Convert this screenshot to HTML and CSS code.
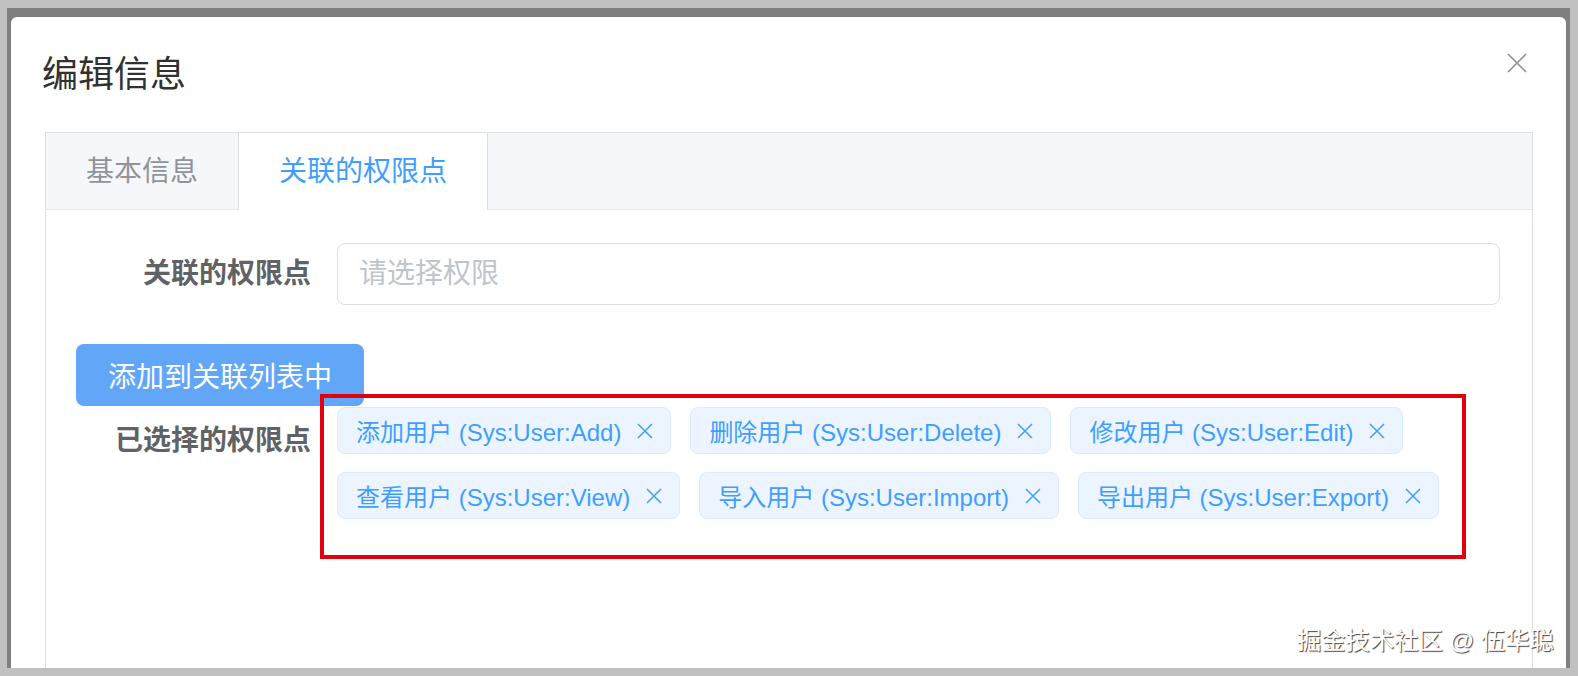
FILE: index.html
```html
<!DOCTYPE html>
<html lang="zh-CN">
<head>
<meta charset="utf-8">
<title>编辑信息</title>
<link rel="stylesheet" href="styles.css">
</head>
<body>
<div class="shot">
  <div class="screen">
    <div class="dialog">
      <div class="dialog-header">
        <span class="dialog-title">编辑信息</span>
        <button class="dialog-close" aria-label="关闭">
          <svg viewBox="0 0 20 20" width="20" height="20"><path d="M1 1 L19 19 M19 1 L1 19" stroke="#909399" stroke-width="1.6" fill="none"/></svg>
        </button>
      </div>
      <div class="dialog-body">
        <div class="tabs">
          <div class="tabs-nav">
            <div class="tab">基本信息</div>
            <div class="tab is-active">关联的权限点</div>
          </div>
          <div class="tabs-content">
            <div class="form-row">
              <label class="form-label">关联的权限点</label>
              <div class="form-control">
                <div class="select-input">请选择权限</div>
              </div>
            </div>
            <div class="btn-row">
              <button class="btn-primary">添加到关联列表中</button>
            </div>
            <div class="form-row selected-row">
              <label class="form-label">已选择的权限点</label>
              <div class="form-control tag-list">
                <span class="tag">添加用户 (Sys:User:Add)<i class="tag-close"><svg viewBox="0 0 20 20" width="20" height="20"><path d="M3 3 L17 17 M17 3 L3 17" stroke="#409eff" stroke-width="1.5" fill="none"/></svg></i></span>
                <span class="tag">删除用户 (Sys:User:Delete)<i class="tag-close"><svg viewBox="0 0 20 20" width="20" height="20"><path d="M3 3 L17 17 M17 3 L3 17" stroke="#409eff" stroke-width="1.5" fill="none"/></svg></i></span>
                <span class="tag">修改用户 (Sys:User:Edit)<i class="tag-close"><svg viewBox="0 0 20 20" width="20" height="20"><path d="M3 3 L17 17 M17 3 L3 17" stroke="#409eff" stroke-width="1.5" fill="none"/></svg></i></span>
                <span class="tag">查看用户 (Sys:User:View)<i class="tag-close"><svg viewBox="0 0 20 20" width="20" height="20"><path d="M3 3 L17 17 M17 3 L3 17" stroke="#409eff" stroke-width="1.5" fill="none"/></svg></i></span>
                <span class="tag">导入用户 (Sys:User:Import)<i class="tag-close"><svg viewBox="0 0 20 20" width="20" height="20"><path d="M3 3 L17 17 M17 3 L3 17" stroke="#409eff" stroke-width="1.5" fill="none"/></svg></i></span>
                <span class="tag">导出用户 (Sys:User:Export)<i class="tag-close"><svg viewBox="0 0 20 20" width="20" height="20"><path d="M3 3 L17 17 M17 3 L3 17" stroke="#409eff" stroke-width="1.5" fill="none"/></svg></i></span>
              </div>
            </div>
          </div>
        </div>
      </div>
    </div>
  </div>
  <div class="mark-box"></div>
  <div class="watermark">掘金技术社区 @ 伍华聪</div>
</div>
</body>
</html>
```

FILE: styles.css
```css
* {
  box-sizing: border-box;
}

html,
body {
  margin: 0;
  height: 100%;
}

body {
  background: #c0c0c0;
  font-family: "Liberation Sans", "Noto Sans CJK SC", sans-serif;
  overflow: hidden;
}

/* outer frame around the captured window */
.shot {
  position: relative;
  width: 1578px;
  height: 676px;
  padding: 8px 8px 8px 7px;
}

/* page under the modal mask */
.screen {
  height: 100%;
  background: #7f7f7f;
  overflow: hidden;
  padding: 9px 4px 0 4px;
}

.dialog {
  position: relative;
  height: 720px;
  background: #fff;
  border-radius: 6px;
}

.dialog-header {
  padding: 34px 32px 0 31px;
}

.dialog-title {
  display: block;
  font-size: 36px;
  line-height: 48px;
  color: #303133;
}

.dialog-close {
  position: absolute;
  top: 36px;
  right: 39px;
  width: 20px;
  height: 20px;
  padding: 0;
  border: 0;
  background: none;
  display: flex;
}

.dialog-body {
  padding: 33px 33px 0 34px;
}

/* border-card tabs */
.tabs {
  border: 1px solid #dcdfe6;
  min-height: 620px;
}

.tabs-nav {
  display: flex;
  height: 77px;
  background: #f5f7fa;
  border-bottom: 1px solid #e4e7ed;
}

.tab {
  height: 76px;
  padding: 0 40px;
  font-size: 28px;
  line-height: 77px;
  color: #909399;
}

.tab.is-active {
  height: 77px;
  margin-bottom: -1px;
  background: #fff;
  color: #409eff;
  border-left: 1px solid #dcdfe6;
  border-right: 1px solid #dcdfe6;
}

.tabs-content {
  padding: 33px 32px 0 30px;
}

.form-row {
  display: flex;
}

.form-label {
  flex: 0 0 261px;
  padding-right: 26px;
  text-align: right;
  font-size: 28px;
  font-weight: bold;
  line-height: 62px;
  color: #606266;
}

.form-control {
  flex: 1;
  min-width: 0;
}

.select-input {
  height: 62px;
  padding: 0 21px;
  border: 1px solid #dcdfe6;
  border-radius: 8px;
  font-size: 28px;
  line-height: 60px;
  color: #c0c4cc;
}

.btn-row {
  margin-top: 39px;
}

.btn-primary {
  height: 62px;
  padding: 0 32px;
  border: 0;
  border-radius: 8px;
  background: #62a6f8;
  color: #fff;
  font-family: inherit;
  font-size: 28px;
}

.selected-row {
  margin-top: 1px;
}

.selected-row .form-label {
  padding-top: 3px;
}

.tag-list {
  display: flex;
  flex-wrap: wrap;
  align-content: flex-start;
  gap: 18px 19px;
}

.tag {
  display: inline-flex;
  align-items: center;
  height: 47px;
  padding: 0 15px 0 18px;
  background: #ecf5ff;
  border: 1px solid #d9ecff;
  border-radius: 8px;
  color: #409eff;
  font-size: 24px;
  white-space: nowrap;
}

.tag-close {
  display: inline-flex;
  width: 20px;
  height: 20px;
  margin-left: 14px;
}

/* red highlight drawn over the selected list */
.mark-box {
  position: absolute;
  left: 320px;
  top: 394px;
  width: 1146px;
  height: 165px;
  border: 4px solid #e1000c;
}

.watermark {
  position: absolute;
  left: 1297px;
  top: 626px;
  font-size: 24.3px;
  line-height: 30px;
  color: #fff;
  text-shadow: 1px 1px 1px rgba(0, 0, 0, 0.75);
  white-space: nowrap;
}
```
